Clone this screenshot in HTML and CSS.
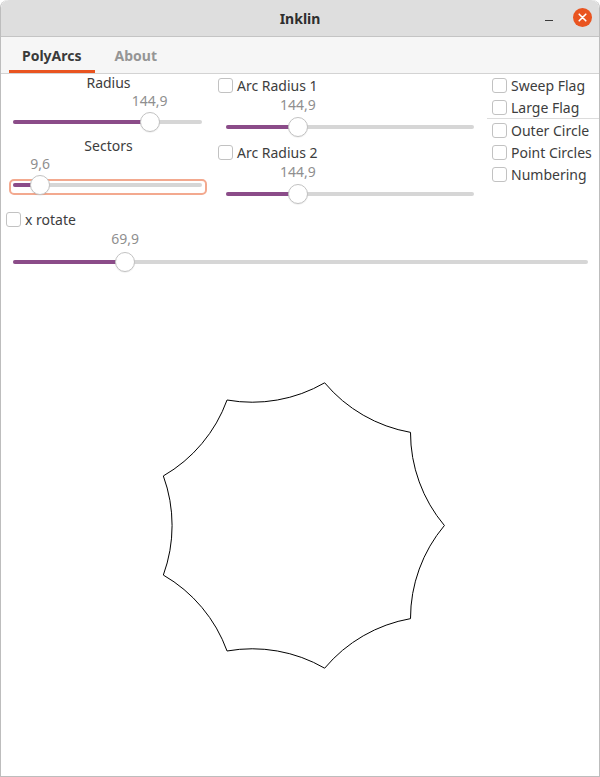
FILE: index.html
```html
<!DOCTYPE html>
<html lang="en">
<head>
<meta charset="utf-8">
<title>Inklin</title>
<link rel="stylesheet" href="styles.css">
</head>
<body>
<div class="window">
  <header class="titlebar">
    <span class="title">Inklin</span>
    <div class="wm-buttons">
      <span class="btn-min"></span>
      <span class="btn-close">
        <svg width="19" height="19" viewBox="0 0 19 19"><circle cx="9.5" cy="9.5" r="9.5" fill="#e95420"/><path d="M6.2 6.2 L12.8 12.8 M12.8 6.2 L6.2 12.8" stroke="#fff" stroke-width="1.6" stroke-linecap="round"/></svg>
      </span>
    </div>
  </header>
  <nav class="tabs">
    <div class="tab active">PolyArcs</div>
    <div class="tab">About</div>
  </nav>
  <main class="content">
    <div class="controls">
      <div class="col col-left">
        <div class="heading">Radius</div>
        <div class="scale scale-left">
          <div class="value-row"><span class="value" style="left:72.3%">144,9</span></div>
          <div class="slider"><div class="track"><div class="fill" style="width:72.3%"></div></div><span class="knob" style="left:72.3%"></span></div>
        </div>
        <div class="heading heading-2">Sectors</div>
        <div class="scale scale-left">
          <div class="value-row"><span class="value" style="left:14.4%">9,6</span></div>
          <div class="slider focused"><div class="track"><div class="fill" style="width:14.4%"></div></div><span class="knob" style="left:14.4%"></span></div>
        </div>
      </div>
      <div class="col col-mid">
        <label class="check"><span class="box"></span><span class="lbl">Arc Radius 1</span></label>
        <div class="scale scale-mid">
          <div class="value-row"><span class="value" style="left:29%">144,9</span></div>
          <div class="slider"><div class="track"><div class="fill" style="width:29%"></div></div><span class="knob" style="left:29%"></span></div>
        </div>
        <label class="check check-2"><span class="box"></span><span class="lbl">Arc Radius 2</span></label>
        <div class="scale scale-mid">
          <div class="value-row"><span class="value" style="left:29%">144,9</span></div>
          <div class="slider"><div class="track"><div class="fill" style="width:29%"></div></div><span class="knob" style="left:29%"></span></div>
        </div>
      </div>
      <div class="col col-right">
        <label class="check"><span class="box"></span><span class="lbl">Sweep Flag</span></label>
        <label class="check"><span class="box"></span><span class="lbl">Large Flag</span></label>
        <div class="separator"></div>
        <label class="check"><span class="box"></span><span class="lbl">Outer Circle</span></label>
        <label class="check"><span class="box"></span><span class="lbl">Point Circles</span></label>
        <label class="check"><span class="box"></span><span class="lbl">Numbering</span></label>
      </div>
    </div>
    <div class="rotate">
      <label class="check"><span class="box"></span><span class="lbl">x rotate</span></label>
      <div class="scale scale-wide">
        <div class="value-row"><span class="value" style="left:19.5%">69,9</span></div>
        <div class="slider"><div class="track"><div class="fill" style="width:19.5%"></div></div><span class="knob" style="left:19.5%"></span></div>
      </div>
    </div>
    <svg class="canvas" viewBox="1 275 598 501" width="598" height="501">
      <path d="M444.4 525.5 A144.9 144.9 0 0 1 410.5 432.36 A144.9 144.9 0 0 1 324.66 382.8 A144.9 144.9 0 0 1 227.05 400.01 A144.9 144.9 0 0 1 163.34 475.94 A144.9 144.9 0 0 1 163.34 575.06 A144.9 144.9 0 0 1 227.05 650.99 A144.9 144.9 0 0 1 324.66 668.2 A144.9 144.9 0 0 1 410.5 618.64 A144.9 144.9 0 0 1 444.4 525.5 Z" fill="none" stroke="#000" stroke-width="1"/>
    </svg>
  </main>
</div>
</body>
</html>
```

FILE: styles.css
```css
* { box-sizing: border-box; }
html, body { margin: 0; padding: 0; background: #ffffff; }
body {
  font-family: "Noto Sans", "DejaVu Sans", sans-serif;
  font-size: 14px;
  color: #3d3d3d;
  width: 600px;
  height: 777px;
  overflow: hidden;
}
.window {
  width: 600px;
  height: 777px;
  border: 1px solid #bdbdbd;
  border-top: none;
  border-radius: 8px 8px 0 0;
  display: flex;
  flex-direction: column;
  overflow: hidden;
  background: #fff;
}
.titlebar {
  height: 37px;
  flex: none;
  background: #dedede;
  border-bottom: 1px solid #c4c4c4;
  border-radius: 8px 8px 0 0;
  display: flex;
  align-items: center;
  justify-content: center;
  position: relative;
}
.title {
  font-weight: 700;
  font-size: 14px;
  color: #2e2e2e;
  margin-top: 1px;
}
.wm-buttons {
  position: absolute;
  right: 7px;
  top: 8px;
  display: flex;
  align-items: center;
  gap: 20px;
}
.btn-min {
  width: 8px;
  height: 1px;
  background: #3a3a3a;
  margin-top: 6px;
}
.btn-close { display: block; width: 19px; height: 19px; }
.btn-close svg { display: block; }
.tabs {
  height: 37px;
  flex: none;
  background: #f6f6f6;
  border-bottom: 1px solid #d3d3d3;
  display: flex;
  padding-left: 8px;
}
.tab {
  font-weight: 700;
  font-size: 14px;
  color: #959595;
  padding: 0 13px;
  display: flex;
  align-items: center;
  border-bottom: 3px solid transparent;
  padding-top: 3px;
  margin-right: 7px;
}
.tab.active {
  color: #3a3a3a;
  border-bottom-color: #e95420;
}
.content {
  flex: 1;
  display: flex;
  flex-direction: column;
}
.controls {
  display: grid;
  grid-template-columns: 214px 272px 1fr;
}
.col { display: flex; flex-direction: column; }
.heading {
  height: 18px;
  line-height: 18px;
  text-align: center;
  margin-left: 1px;
}
.heading-2 { margin-top: 3px; }
.scale { position: relative; }
.scale-left { margin: 0 13px 0 12px; }
.scale-mid { margin: 0 13px 0 11px; }
.scale-wide { margin: 0 11px 0 12px; }
.value-row {
  position: relative;
  height: 17px;
}
.value {
  position: absolute;
  top: 0;
  line-height: 17px;
  transform: translateX(-50%);
  color: #8f8f8f;
  white-space: nowrap;
}
.slider {
  position: relative;
  height: 24px;
  display: flex;
  align-items: center;
}
.track {
  width: 100%;
  height: 4px;
  background: #d6d6d6;
  border-radius: 2px;
  overflow: hidden;
}
.fill {
  height: 100%;
  background: #8b4c89;
}
.knob {
  position: absolute;
  top: 2px;
  width: 20px;
  height: 20px;
  border-radius: 50%;
  background: #fff;
  border: 1px solid #c2c2c2;
  transform: translateX(-50%);
  box-shadow: 0 1px 1px rgba(0,0,0,0.06);
}
.slider.focused::before {
  content: "";
  position: absolute;
  left: -4px;
  right: -5px;
  top: 6px;
  height: 12px;
  border: 2px solid #f3a98f;
  border-radius: 5px;
}
.scale-left .value-row { height: 18px; }
.check {
  display: flex;
  align-items: center;
  height: 22px;
}
.box {
  width: 15px;
  height: 15px;
  border: 1px solid #c2c2c2;
  border-radius: 3px;
  background: #fff;
  flex: none;
}
.lbl { margin-left: 4px; white-space: nowrap; }
.col-mid .check { padding-left: 3px; }
.col-mid .check-2 { margin-top: 2px; }
.col-mid .value-row { height: 19px; }
.col-right .check { padding-left: 5px; }
.separator {
  height: 1px;
  background: #dcdcdc;
}
.rotate {
  margin-top: 2px;
  display: flex;
  flex-direction: column;
}
.rotate .check { padding-left: 5px; }
.rotate .value-row { height: 20px; }
.canvas {
  display: block;
  flex: none;
  margin-top: 1px;
}
```
